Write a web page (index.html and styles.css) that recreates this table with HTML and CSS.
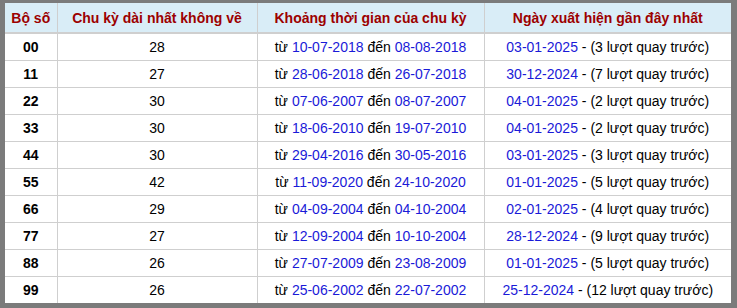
FILE: index.html
```html
<!DOCTYPE html>
<html>
<head>
<meta charset="utf-8">
<link rel="stylesheet" href="styles.css">
</head>
<body>
<div class="frame">
<table class="tbl">
<colgroup><col class="c1"><col class="c2"><col class="c3"><col class="c4"></colgroup>
<thead>
<tr><th>Bộ số</th><th>Chu kỳ dài nhất không về</th><th>Khoảng thời gian của chu kỳ</th><th>Ngày xuất hiện gần đây nhất</th></tr>
</thead>
<tbody>
<tr><td class="num">00</td><td>28</td><td>từ <span class="d">10-07-2018</span> đến <span class="d">08-08-2018</span></td><td><span class="d">03-01-2025</span> - (3 lượt quay trước)</td></tr>
<tr><td class="num">11</td><td>27</td><td>từ <span class="d">28-06-2018</span> đến <span class="d">26-07-2018</span></td><td><span class="d">30-12-2024</span> - (7 lượt quay trước)</td></tr>
<tr><td class="num">22</td><td>30</td><td>từ <span class="d">07-06-2007</span> đến <span class="d">08-07-2007</span></td><td><span class="d">04-01-2025</span> - (2 lượt quay trước)</td></tr>
<tr><td class="num">33</td><td>30</td><td>từ <span class="d">18-06-2010</span> đến <span class="d">19-07-2010</span></td><td><span class="d">04-01-2025</span> - (2 lượt quay trước)</td></tr>
<tr><td class="num">44</td><td>30</td><td>từ <span class="d">29-04-2016</span> đến <span class="d">30-05-2016</span></td><td><span class="d">03-01-2025</span> - (3 lượt quay trước)</td></tr>
<tr><td class="num">55</td><td>42</td><td>từ <span class="d">11-09-2020</span> đến <span class="d">24-10-2020</span></td><td><span class="d">01-01-2025</span> - (5 lượt quay trước)</td></tr>
<tr><td class="num">66</td><td>29</td><td>từ <span class="d">04-09-2004</span> đến <span class="d">04-10-2004</span></td><td><span class="d">02-01-2025</span> - (4 lượt quay trước)</td></tr>
<tr><td class="num">77</td><td>27</td><td>từ <span class="d">12-09-2004</span> đến <span class="d">10-10-2004</span></td><td><span class="d">28-12-2024</span> - (9 lượt quay trước)</td></tr>
<tr><td class="num">88</td><td>26</td><td>từ <span class="d">27-07-2009</span> đến <span class="d">23-08-2009</span></td><td><span class="d">01-01-2025</span> - (5 lượt quay trước)</td></tr>
<tr><td class="num">99</td><td>26</td><td>từ <span class="d">25-06-2002</span> đến <span class="d">22-07-2002</span></td><td><span class="d">25-12-2024</span> - (12 lượt quay trước)</td></tr>
</tbody>
</table>
</div>
</body>
</html>
```
FILE: styles.css
```css
html, body { margin: 0; padding: 0; background: #fff; }
.frame {
  width: 737px;
  height: 308px;
  box-sizing: border-box;
  background: #7b7b7b;
  padding: 3px 6px 6px 5px;
}
.tbl {
  width: 726px;
  height: 299px;
  border-collapse: collapse;
  table-layout: fixed;
  background: #fff;
  font-family: "Liberation Sans", Arial, sans-serif;
  font-size: 14px;
  color: #000;
}
.c1 { width: 52px; }
.c2 { width: 200px; }
.c3 { width: 227px; }
.c4 { width: 247px; }
.tbl th {
  background: #d9edf7;
  color: #9c0000;
  font-weight: bold;
  height: 29px;
  padding: 0;
  text-align: center;
  border-left: 1px solid #cfcfcf;
  border-bottom: 2px solid #cfcfcf;
}
.tbl td {
  height: 26px;
  padding: 0;
  text-align: center;
  border-left: 1px solid #cfcfcf;
  border-top: 1px solid #cfcfcf;
}
.tbl th:first-child, .tbl td:first-child { border-left: none; }
.tbl tbody tr:first-child td { border-top: none; }
.num { font-weight: bold; }
.d { color: #1a1ad8; }
```
